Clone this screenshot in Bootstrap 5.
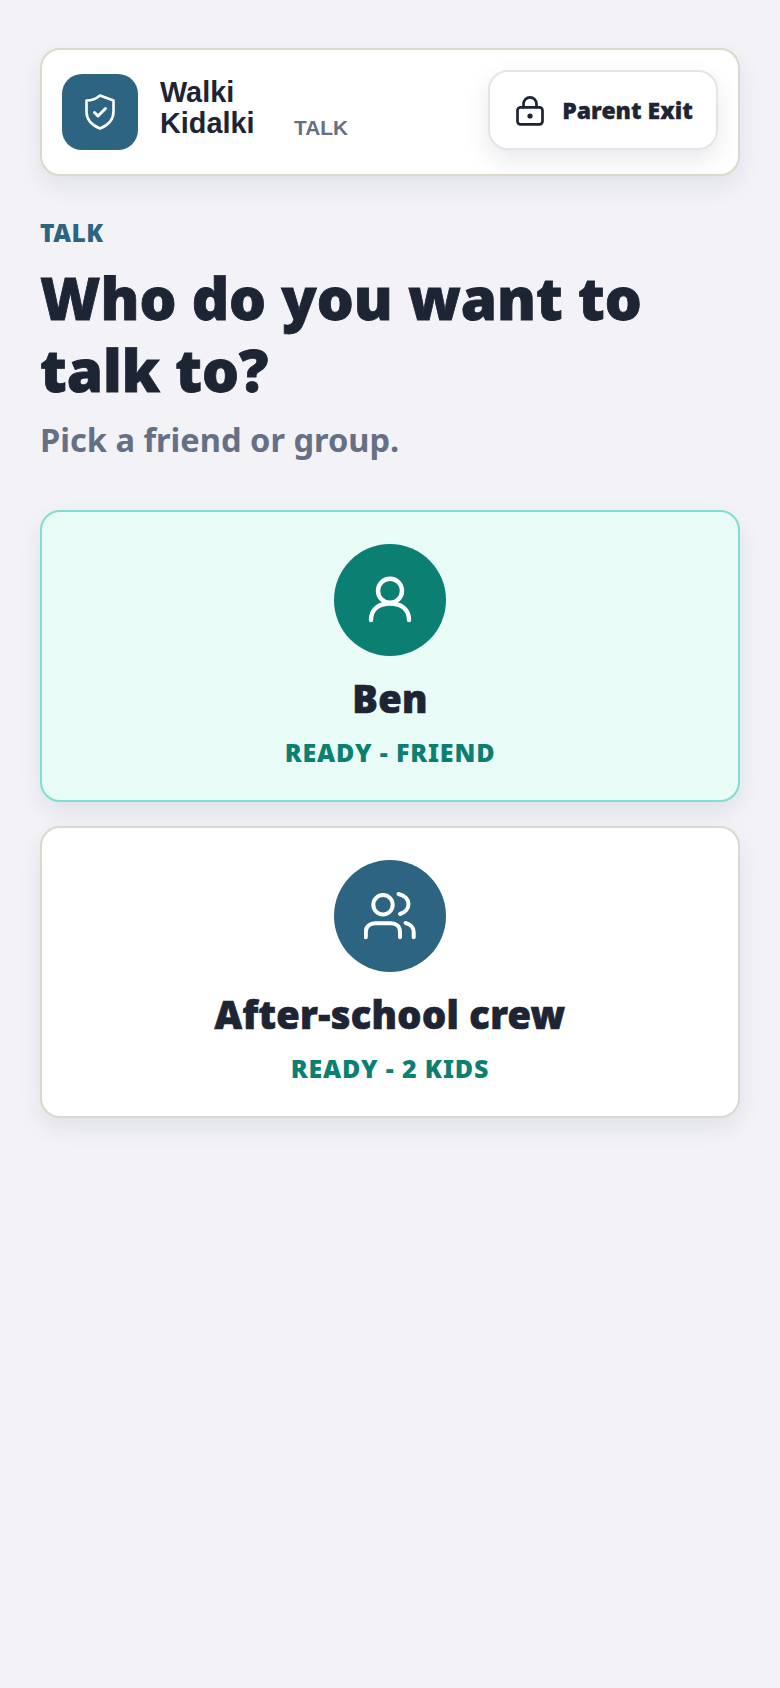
<!DOCTYPE html>
<html lang="en">
<head>
<meta charset="utf-8">
<title>Walki Kidalki</title>
<link rel="stylesheet" href="https://cdn.jsdelivr.net/npm/bootstrap@5.3.0/dist/css/bootstrap.min.css">
<style>
body{background:#f2f2f7;color:#1d2433;font-family:"Noto Sans",sans-serif}
.shell{padding:48px 40px;min-height:1688px}
.topbar{background:#fff;border:2px solid #ddd8cc;border-radius:20px;padding:24px 20px;box-shadow:0 10px 24px rgba(29,36,51,.08);height:128px}
.logo-tile{width:76px;height:76px;border-radius:20px;background:#2c6482;color:#fff;flex:none}
.brand{font-family:"Liberation Sans",sans-serif;font-weight:700;font-size:28.8px;line-height:31px;margin:-8px 0 0 22px;width:100px}
.tag{font-family:"Liberation Sans",sans-serif;font-weight:700;font-size:20.8px;color:#667085;margin-left:34px;align-self:flex-end;line-height:26px;padding-bottom:9px}
.exit-btn{margin:-5px 0 0 auto;width:230px;height:80px;background:#fff;border:2px solid #e4e4ec;border-radius:20px;font-weight:900;font-size:23px;color:#1d2433;box-shadow:0 10px 24px rgba(29,36,51,.1);gap:18px;padding:2px 0 0 3px}
.exit-btn span{-webkit-text-stroke:.3px #1d2433}
.eyebrow{font-weight:900;font-size:24.5px;color:#2c6482;line-height:30px;margin:42px 0 0;letter-spacing:.5px}
.headline{font-weight:900;font-size:58.2px;line-height:72px;margin:14px 0 0;color:#1d2433;-webkit-text-stroke:.8px #1d2433}
.sub{font-weight:700;font-size:32.6px;line-height:44px;color:#667085;margin:12px 0 0}
.stack{margin-top:48px;gap:24px}
.pick{border:2px solid #ddd8cc;border-radius:20px;background:#fff;height:292px;padding-top:32px;box-shadow:0 10px 24px rgba(29,36,51,.08)}
.pick-on{background:#e8fbf6;border-color:#7fded0}
.disc{width:112px;height:112px;border-radius:50%;color:#fff;background:#2c6482}
.disc-green{background:#0b7f71}
.who{font-weight:900;font-size:38px;line-height:50px;margin:17px 0 0;color:#1d2433;letter-spacing:.35px;-webkit-text-stroke:.7px #1d2433}
.state{font-weight:900;font-size:25px;line-height:32px;color:#0b7f71;margin:13px 0 0;letter-spacing:.85px}
</style>
</head>
<body>
<div class="shell">
  <header class="topbar d-flex align-items-center">
    <div class="logo-tile d-flex align-items-center justify-content-center">
      <svg width="36" height="36" viewBox="0 0 36 36" fill="none" stroke="currentColor" stroke-width="2.6" stroke-linecap="round" stroke-linejoin="round"><path d="M18 1.5 L31.5 6.5 V17.5 C31.5 26 25.5 31.5 18 34.5 C10.5 31.5 4.5 26 4.5 17.5 V6.5 C9 6.5 14 5 18 1.5 Z"/><path d="M12.5 18.5 L16 22 L23.5 14.5" stroke-width="3"/></svg>
    </div>
    <div class="brand">Walki Kidalki</div>
    <div class="tag">TALK</div>
    <button class="btn exit-btn d-flex align-items-center justify-content-center" type="button">
      <svg width="28" height="30" viewBox="0 0 28 30" fill="none" stroke="currentColor" stroke-width="2.7" stroke-linecap="round" stroke-linejoin="round"><rect x="1.5" y="11.3" width="25" height="17" rx="3"/><path d="M7.5 11.3 V8 C7.5 4.3 10.5 1.4 14 1.4 C17.5 1.4 20.5 4.3 20.5 8 V11.3"/><circle cx="14" cy="20" r="2.6" fill="currentColor" stroke="none"/></svg>
      <span>Parent Exit</span>
    </button>
  </header>

  <div class="eyebrow">TALK</div>
  <h1 class="headline">Who do you want to talk to?</h1>
  <p class="sub">Pick a friend or group.</p>

  <div class="stack d-flex flex-column">
    <div class="pick pick-on d-flex flex-column align-items-center text-center">
      <div class="disc disc-green d-flex align-items-center justify-content-center">
        <svg width="48" height="48" viewBox="0 0 48 48" fill="none" stroke="currentColor" stroke-width="4.4" stroke-linecap="round"><circle cx="24" cy="14.7" r="12"/><path d="M5 44 C5 33 13 27.5 24 27.5 C35 27.5 43 33 43 44"/></svg>
      </div>
      <div class="who">Ben</div>
      <div class="state">READY - FRIEND</div>
    </div>
    <div class="pick d-flex flex-column align-items-center text-center">
      <div class="disc d-flex align-items-center justify-content-center">
        <svg width="52" height="52" viewBox="0 0 52 52" fill="none" stroke="currentColor" stroke-width="4" stroke-linecap="round"><circle cx="19" cy="14.7" r="9.7"/><path d="M34.5 4 C41 5.5 44.5 9.5 44.5 14 C44.5 18.5 41 22.5 36 24"/><path d="M1.8 47.3 V42 C1.8 36.5 6 33.3 11 33.3 H27 C32 33.3 36 36.5 36 42 V47.3"/><path d="M41.5 33 C46 34 49.7 37.5 49.7 42 V47.3"/></svg>
      </div>
      <div class="who">After-school crew</div>
      <div class="state">READY - 2 KIDS</div>
    </div>
  </div>
</div>
</body>
</html>
